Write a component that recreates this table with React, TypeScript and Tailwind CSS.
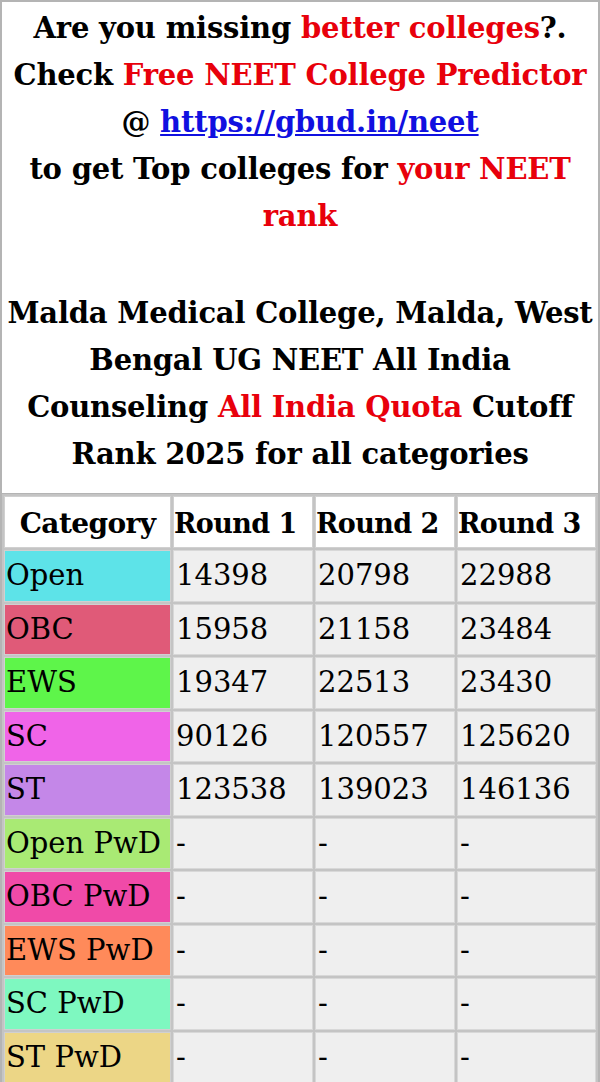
const rows = [
  { cat: 'Open', bg: 'bg-[#5de3e8]', r: ['14398', '20798', '22988'] },
  { cat: 'OBC', bg: 'bg-[#e05a78]', r: ['15958', '21158', '23484'] },
  { cat: 'EWS', bg: 'bg-[#5ef54a]', r: ['19347', '22513', '23430'] },
  { cat: 'SC', bg: 'bg-[#f064e8]', r: ['90126', '120557', '125620'] },
  { cat: 'ST', bg: 'bg-[#c487e8]', r: ['123538', '139023', '146136'] },
  { cat: 'Open PwD', bg: 'bg-[#a9ea74]', r: ['-', '-', '-'] },
  { cat: 'OBC PwD', bg: 'bg-[#f04aa8]', r: ['-', '-', '-'] },
  { cat: 'EWS PwD', bg: 'bg-[#ff8a5a]', r: ['-', '-', '-'] },
  { cat: 'SC PwD', bg: 'bg-[#7ef8c0]', r: ['-', '-', '-'] },
  { cat: 'ST PwD', bg: 'bg-[#ecd686]', r: ['-', '-', '-'] },
];

export default function App() {
  return (
    <div className="w-[600px] min-h-[1082px] bg-white border-x-2 border-t-2 border-[#b4b4b4] font-['DejaVu_Serif',serif] text-black">
      <div className="text-center font-bold text-[29px] leading-[47px] pt-[3px] pb-[15px] whitespace-nowrap tracking-[-0.2px]">
        <p>
          Are you missing <span className="text-[#e8000b]">better colleges</span>?.
          <br />
          Check <span className="text-[#e8000b]">Free NEET College Predictor</span>
          <br />
          @ <a href="#" className="text-[#1010e0] underline">https://gbud.in/neet</a>
          <br />
          to get Top colleges for <span className="text-[#e8000b]">your NEET</span>
          <br />
          <span className="text-[#e8000b]">rank</span>
        </p>
        <div className="h-[50px]" />
        <p>
          Malda Medical College, Malda, West
          <br />
          Bengal UG NEET All India
          <br />
          Counseling <span className="text-[#e8000b]">All India Quota</span> Cutoff
          <br />
          Rank 2025 for all categories
        </p>
      </div>
      <table className="w-full table-fixed border-separate border-spacing-[2px] bg-[#c4c4c4] border-t border-[#b4b4b4] text-[29px]">
        <thead>
          <tr className="h-[52px]">
            <th className="w-[167px] bg-white border border-[#d0d0d0] text-center font-bold px-0 pt-[4px] whitespace-nowrap tracking-[-0.6px] text-[28px]">Category</th>
            <th className="w-[140px] bg-white border border-[#d0d0d0] text-left font-bold px-0 pt-[4px] whitespace-nowrap tracking-[-0.6px] text-[27px]">Round 1</th>
            <th className="w-[140px] bg-white border border-[#d0d0d0] text-left font-bold px-0 pt-[4px] whitespace-nowrap tracking-[-0.6px] text-[27px]">Round 2</th>
            <th className="bg-white border border-[#d0d0d0] text-left font-bold px-0 pt-[4px] whitespace-nowrap tracking-[-0.6px] text-[27px]">Round 3</th>
          </tr>
        </thead>
        <tbody>
          {rows.map((row) => (
            <tr key={row.cat} className="h-[51.5px]">
              <td className={`${row.bg} border border-[#d0d0d0] px-[1px] align-middle whitespace-nowrap overflow-hidden`}>{row.cat}</td>
              {row.r.map((v, i) => (
                <td key={i} className="bg-[#efefef] border border-[#d8d8d8] px-[2px] align-middle whitespace-nowrap">
                  {v}
                </td>
              ))}
            </tr>
          ))}
        </tbody>
      </table>
    </div>
  );
}
